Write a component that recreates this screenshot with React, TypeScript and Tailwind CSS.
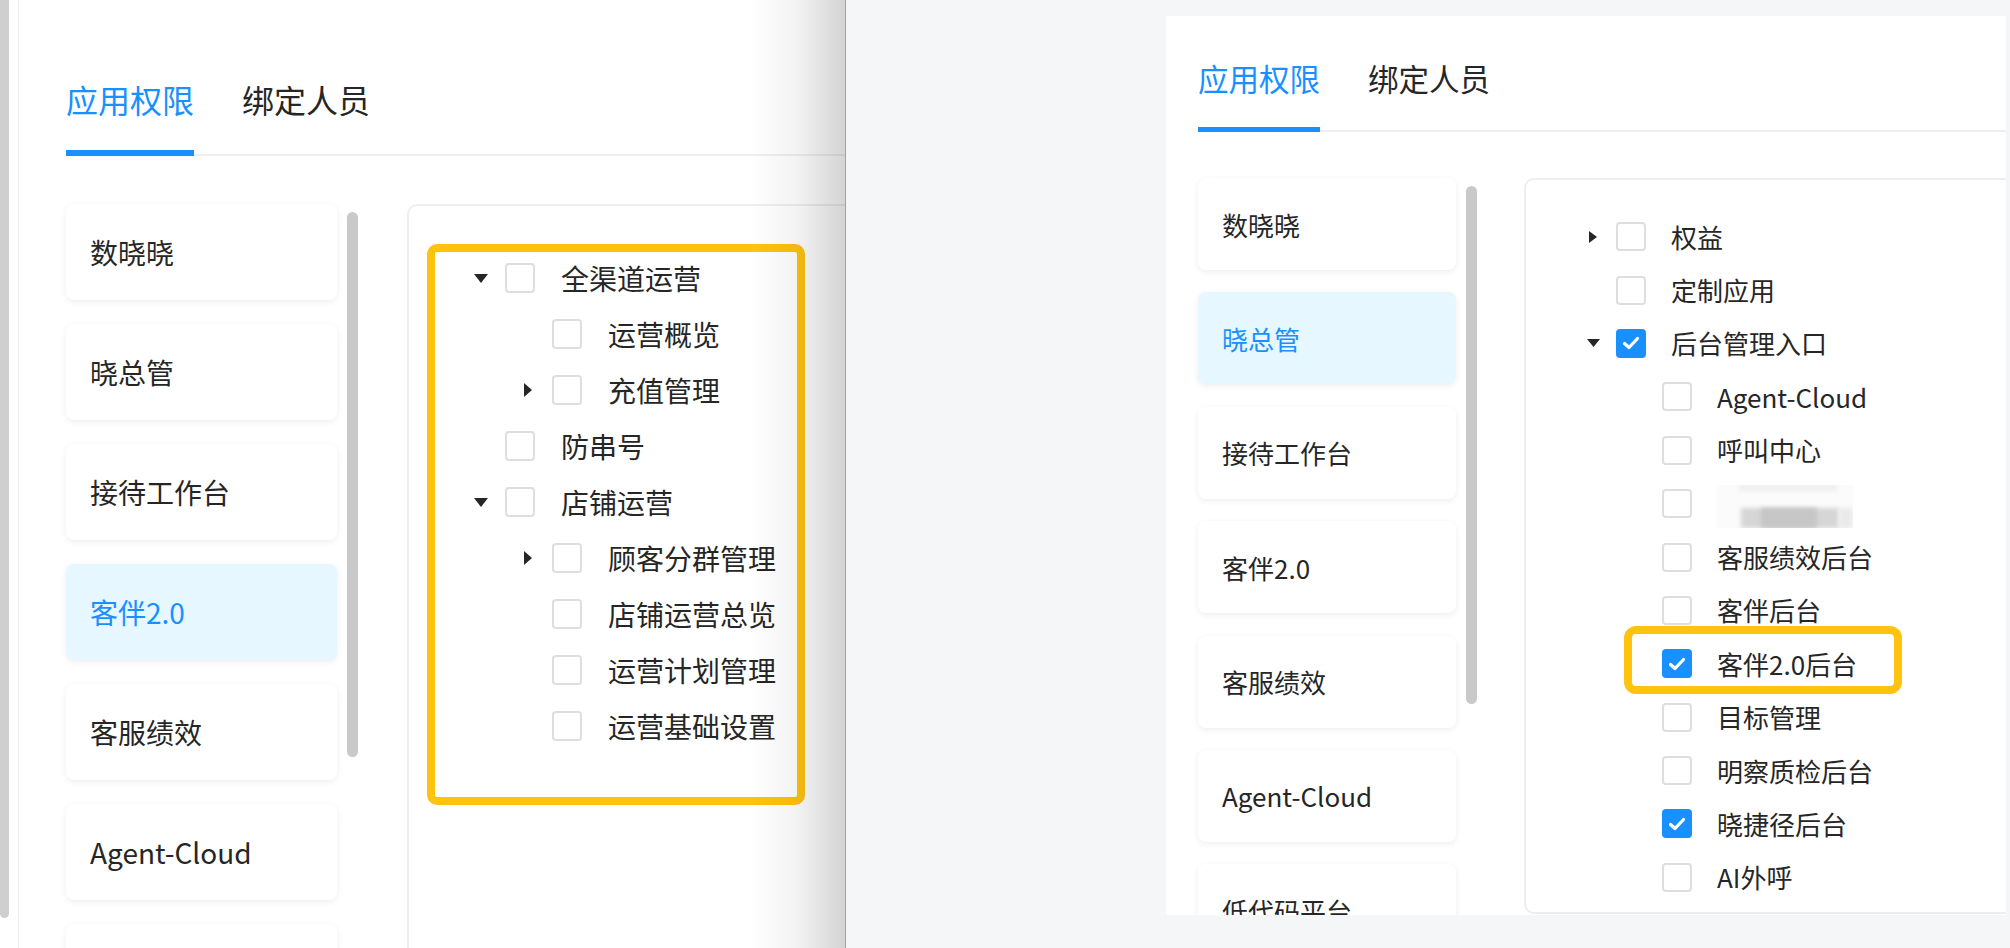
import React from "react";

type Node = { label: string; level: number; caret?: "down" | "right"; checked?: boolean; blurred?: boolean };

const leftTree: Node[] = [
  { label: "全渠道运营", level: 0, caret: "down" },
  { label: "运营概览", level: 1 },
  { label: "充值管理", level: 1, caret: "right" },
  { label: "防串号", level: 0 },
  { label: "店铺运营", level: 0, caret: "down" },
  { label: "顾客分群管理", level: 1, caret: "right" },
  { label: "店铺运营总览", level: 1 },
  { label: "运营计划管理", level: 1 },
  { label: "运营基础设置", level: 1 },
];

const rightTree: Node[] = [
  { label: "权益", level: 0, caret: "right" },
  { label: "定制应用", level: 0 },
  { label: "后台管理入口", level: 0, caret: "down", checked: true },
  { label: "Agent-Cloud", level: 1 },
  { label: "呼叫中心", level: 1 },
  { label: "", level: 1, blurred: true },
  { label: "客服绩效后台", level: 1 },
  { label: "客伴后台", level: 1 },
  { label: "客伴2.0后台", level: 1, checked: true },
  { label: "目标管理", level: 1 },
  { label: "明察质检后台", level: 1 },
  { label: "晓捷径后台", level: 1, checked: true },
  { label: "AI外呼", level: 1 },
];

const apps = ["数晓晓", "晓总管", "接待工作台", "客伴2.0", "客服绩效", "Agent-Cloud", "低代码平台"];

function Caret({ dir, big }: { dir: "down" | "right"; big: boolean }) {
  if (dir === "down") {
    return big ? (
      <svg width="14" height="9" viewBox="0 0 14 9">
        <polygon points="0,0 14,0 7,9" fill="#262626" />
      </svg>
    ) : (
      <svg width="13" height="8" viewBox="0 0 13 8">
        <polygon points="0,0 13,0 6.5,8" fill="#262626" />
      </svg>
    );
  }
  return big ? (
    <svg width="8" height="14" viewBox="0 0 8 14">
      <polygon points="0,0 8,7 0,14" fill="#262626" />
    </svg>
  ) : (
    <svg width="8" height="12" viewBox="0 0 8 12">
      <polygon points="0,0 8,6 0,12" fill="#262626" />
    </svg>
  );
}

function Checkbox({ checked, big }: { checked?: boolean; big: boolean }) {
  const size = big ? "w-[30px] h-[30px]" : "w-[30px] h-[29px]";
  if (checked) {
    return (
      <div className={`${size} shrink-0 rounded-[4px] bg-[#1890ff] flex items-center justify-center`}>
        <svg width="18" height="14" viewBox="0 0 18 14">
          <polyline points="2.5,7.5 7,11.5 15.5,2.5" fill="none" stroke="#ffffff" strokeWidth="3.2" strokeLinecap="round" strokeLinejoin="round" />
        </svg>
      </div>
    );
  }
  return <div className={`${size} shrink-0 rounded-[4px] border-2 border-[#dedede] bg-white`} />;
}

function LeftWindow() {
  return (
    <div className="relative flex h-[948px] w-[845px] shrink-0 overflow-hidden bg-white">
      <div className="w-[9px] shrink-0">
        <div className="h-[918px] w-[9px] rounded-b-[5px] bg-[#cfcfcf]" />
      </div>
      <div className="w-[10px] shrink-0 border-r border-[#ececec]" />
      <div className="min-w-0 flex-1 pl-[47px]">
        <div className="flex h-[156px] w-[900px] gap-[48px] border-b-2 border-[#efefef]">
          <div className="relative pt-[79px] text-[32px] leading-[40px] text-[#1890ff]">
            应用权限
            <div className="absolute -bottom-[2px] left-0 right-0 h-[6px] bg-[#1890ff]" />
          </div>
          <div className="pt-[79px] text-[32px] leading-[40px] text-[#262626]">绑定人员</div>
        </div>
        <div className="mt-[48px] flex">
          <div className="flex w-[271px] shrink-0 flex-col gap-[24px]">
            {apps.map((a, idx) => {
              const sel = a === "客伴2.0";
              return (
                <div
                  key={a}
                  className={`flex h-[96px] shrink-0 items-center rounded-[8px] pl-[24px] text-[28px] shadow-[0_2px_6px_rgba(0,0,0,0.07)] ${
                    sel ? "bg-[#e6f7ff] text-[#1890ff]" : "bg-white text-[#262626]"
                  }`}
                >
                  {idx < 6 ? a : ""}
                </div>
              );
            })}
          </div>
          <div className="ml-[10px] mt-[8px] h-[545px] w-[11px] shrink-0 rounded-full bg-[#c9c9c9]" />
          <div className="relative ml-[49px] h-[900px] w-[600px] shrink-0 rounded-tl-[10px] border-2 border-[#eeeeee] pl-[48px] pt-[44px]">
            {leftTree.map((n, i) => (
              <div key={i} className="flex h-[56px] items-center">
                {n.level === 1 && <div className="w-[47px] shrink-0" />}
                <div className="flex w-[48px] shrink-0 items-center justify-center">
                  {n.caret && <Caret dir={n.caret} big />}
                </div>
                <Checkbox checked={n.checked} big />
                <div className="ml-[26px] whitespace-nowrap text-[28px] leading-[36px] text-[#262626]">{n.label}</div>
              </div>
            ))}
            <div className="absolute left-[18px] top-[38px] h-[561px] w-[378px] rounded-[10px] border-[8px] border-[#ffc20e]" />
          </div>
        </div>
      </div>
      <div className="absolute inset-y-0 right-0 w-[95px] bg-linear-to-r from-black/0 via-black/[0.05] to-black/[0.17]" />
    </div>
  );
}

function RightWindow() {
  return (
    <div className="flex h-[948px] flex-1 border-l border-[#a3a3a3] bg-[#f5f6f8] pl-[320px] pr-[4px] pt-[16px]">
      <div className="h-[899px] w-[840px] shrink-0 overflow-hidden bg-white">
        <div className="ml-[32px] flex h-[116px] gap-[48px] border-b-2 border-[#efefef]">
          <div className="relative pt-[43px] text-[30.5px] leading-[38px] text-[#1890ff]">
            应用权限
            <div className="absolute -bottom-[2px] left-0 right-0 h-[5px] bg-[#1890ff]" />
          </div>
          <div className="pt-[43px] text-[30.5px] leading-[38px] text-[#262626]">绑定人员</div>
        </div>
        <div className="ml-[32px] mt-[46px] flex">
          <div className="flex w-[258px] shrink-0 flex-col gap-[22.4px]">
            {apps.map((a) => {
              const sel = a === "晓总管";
              return (
                <div
                  key={a}
                  className={`flex h-[92px] shrink-0 items-center rounded-[8px] pl-[24px] text-[26px] shadow-[0_2px_6px_rgba(0,0,0,0.07)] ${
                    sel ? "bg-[#e6f7ff] text-[#1890ff]" : "bg-white text-[#262626]"
                  }`}
                >
                  {a}
                </div>
              );
            })}
          </div>
          <div className="ml-[10px] mt-[8px] h-[518px] w-[11px] shrink-0 rounded-full bg-[#c9c9c9]" />
          <div className="relative ml-[47px] h-[736px] w-[600px] shrink-0 rounded-[10px] border-2 border-[#eeeeee] pl-[44px] pt-[30px]">
            {rightTree.map((n, i) => (
              <div key={i} className="flex h-[53.4px] items-center">
                {n.level === 1 && <div className="w-[46px] shrink-0" />}
                <div className="flex w-[46px] shrink-0 items-center justify-center">
                  {n.caret && <Caret dir={n.caret} big={false} />}
                </div>
                <Checkbox checked={n.checked} big={false} />
                {n.blurred ? (
                  <div className="relative ml-[25px] mt-[6px] h-[43px] w-[136px] overflow-hidden bg-[#fbfbfb]">
                    <div className="absolute left-[22px] top-[0px] h-[6px] w-[98px] bg-[#eeeeee] blur-[2px]" />
                    <div className="absolute left-[24px] top-[23px] h-[20px] w-[98px] bg-[#d6d6d6] blur-[2px]" />
                    <div className="absolute left-[44px] top-[23px] h-[20px] w-[56px] bg-[#c6c6c6] blur-[2px]" />
                    <div className="absolute right-0 top-[23px] h-[20px] w-[14px] bg-[#eaeaea] blur-[2px]" />
                  </div>
                ) : (
                  <div className="ml-[25px] whitespace-nowrap text-[26px] leading-[34px] text-[#262626]">{n.label}</div>
                )}
              </div>
            ))}
            <div className="absolute left-[98px] top-[446px] h-[68px] w-[278px] rounded-[12px] border-[8px] border-[#ffc20e]" />
          </div>
        </div>
      </div>
    </div>
  );
}

export default function App() {
  return (
    <div
      className="flex h-[948px] w-[2010px] overflow-hidden bg-white"
      style={{ fontFamily: '"Noto Sans CJK SC", "Noto Sans", sans-serif' }}
    >
      <LeftWindow />
      <RightWindow />
    </div>
  );
}
